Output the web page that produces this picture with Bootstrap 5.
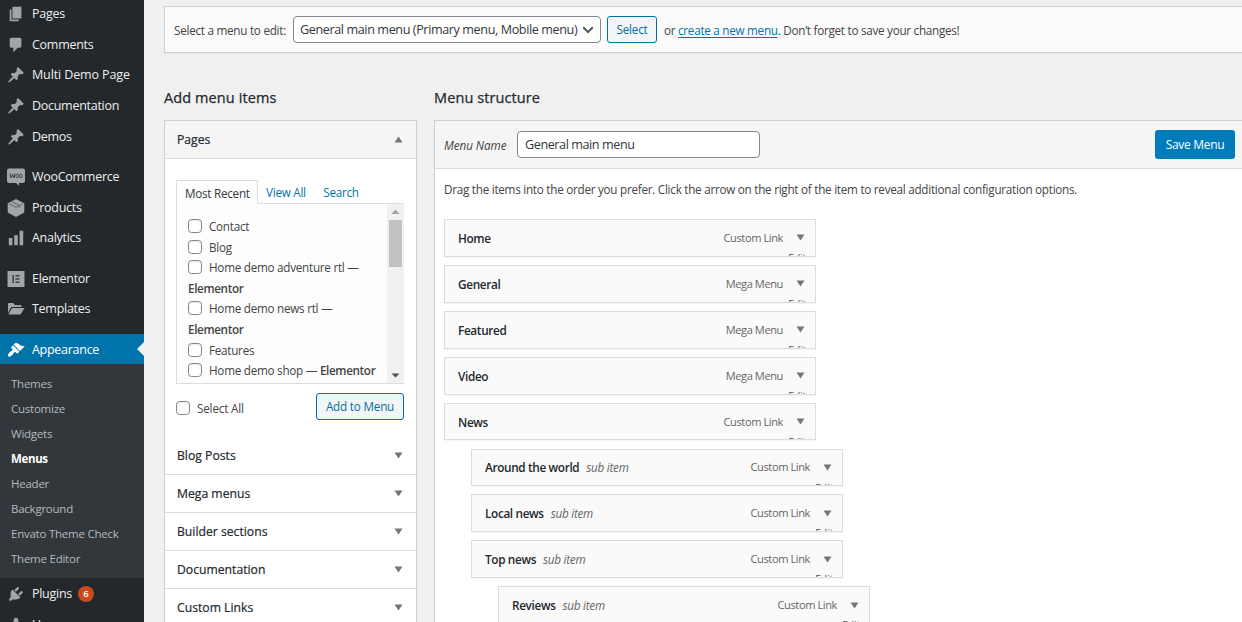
<!DOCTYPE html>
<html lang="en">
<head>
<meta charset="utf-8">
<meta name="viewport" content="width=device-width, initial-scale=1">
<title>Menus</title>
<link rel="stylesheet" href="https://cdn.jsdelivr.net/npm/bootstrap@5.3.0/dist/css/bootstrap.min.css">
<style>
body{width:1242px;height:622px;overflow:hidden;background:#f0f0f1;color:#444;font-family:"Open Sans","Noto Sans",sans-serif;font-size:11.7px;line-height:18px;letter-spacing:-.26px}
/* sidebar */
.side{width:144px;height:622px;background:#23282d;overflow:hidden}
.side ul{margin-top:-1.5px}
.side-item{height:30.6px;padding:1px 0 0 7px;gap:7px;color:#eee;font-size:12.5px;letter-spacing:-.28px}
.side-item svg{width:18px;height:18px;fill:#a0a5aa;flex:none}
.side-gap{height:9.9px}
.side-item.active{background:#0073aa;color:#fff;height:30px}
.side-item.active svg{fill:#fff}
.side-item.active::after{content:"";position:absolute;right:0;top:8px;border:7px solid transparent;border-right-color:#f0f0f1;border-left:0}
.submenu{background:#32373c;padding:7px 0;height:214px}
.submenu .nav-link{height:25px;line-height:25px;padding:0 0 0 11px;color:#b4b9be;font-size:11.5px;letter-spacing:-.24px}
.submenu .nav-link.current{color:#fff;font-weight:700;letter-spacing:-.35px}
.count{width:16px;height:16px;background:#ca4a1f;color:#fff;font-size:9.5px;font-weight:600;line-height:16px;margin-left:-1px;letter-spacing:0}
/* main */
.content-area{padding:6px 0 0 20px;width:1098px}
.manage{height:47px;width:1100px;background:#fbfbfb;border:1px solid #ccd0d4;padding:0 9px;box-shadow:0 1px 1px rgba(0,0,0,.04)}
.field{border:1px solid #7e8993;border-radius:4px;background:#fff;height:27px;color:#32373c;font-size:12.6px;padding:1px 7px 0;line-height:24px}
.manage .field{width:308px;margin:0 6px 0 7px;padding:1px 6px 0;letter-spacing:-.39px}
.manage .field svg{width:12px;height:8px;margin-top:-1px}
.btn-wp{border:1px solid #0071a1;border-radius:3px;background:#f3f5f6;color:#0071a1;height:27px;font-size:11.7px;line-height:25px;padding:0;letter-spacing:-.2px}
.hint{margin-left:7px;letter-spacing:-.27px}
.manage a{color:#0073aa;text-decoration:underline;text-underline-offset:2px}
.heading{font-size:14.5px;font-weight:500;color:#23282d;line-height:20px;margin:0;letter-spacing:.1px;-webkit-text-stroke:.25px #23282d}
.left-col{width:253px;margin-right:17px}
.panel{border:1px solid #ccd0d4;background:#fff;border-radius:0}
.acc-row{height:38px;border-bottom:1px solid #ddd;padding:0 13px 0 12px;color:#23282d;font-size:12.2px;letter-spacing:0;-webkit-text-stroke:.2px #23282d}
.acc-row.open{background:#f5f5f5}
.tri{width:9px;height:7px;fill:#72777c;flex:none}
.tabs-row{height:24px;margin-bottom:-1px;position:relative}
.tab-on{width:82px;height:24px;border:1px solid #ddd;border-bottom:0;background:#fdfdfd;color:#32373c;padding-left:8px;line-height:24px}
.tab-off{color:#0073aa;line-height:24px}
.pages-box{height:181px;border:1px solid #ddd;border-right:0;background:#fdfdfd;overflow:hidden}
.pages-list{padding:12px 0 0 11px;line-height:20.6px}
.pages-list b{font-weight:600;letter-spacing:-.36px}
.pages-list>div{height:20.6px;white-space:nowrap}
.box{width:14px;height:14px;border:1px solid #7e8993;border-radius:3.5px;background:#fff;display:inline-block;flex:none;box-shadow:inset 0 1px 2px rgba(0,0,0,.1)}
.pages-list .box{margin-right:7px;vertical-align:-2px}
.scroll{width:17px;background:#f1f1f1;margin:0 0 -1px;height:180px;padding:5px 0 6px}
.thumb{width:13px;height:47px;background:#c1c1c1;margin-top:6px}
.struct{width:830px;height:520px}
.struct-head{height:48px;background:#f5f5f5;border-bottom:1px solid #ddd;padding:0 9px}
.save{background:#007cba;color:#fff;width:80px;height:29px;border-radius:3px;font-size:12px;line-height:29px;padding:0;border:0;margin-left:395px;letter-spacing:-.32px}
.menu-item{width:372px;height:37.8px;margin-bottom:8.1px;border:1px solid #ddd;background:#fafafa;padding:0 10px 0 13px;overflow:hidden;box-shadow:0 1px 1px rgba(0,0,0,.04)}
.menu-item .label{font-weight:600;color:#23282d;font-size:11.8px;letter-spacing:-.36px}
.menu-item .sub{font-style:italic;color:#666;margin-left:7px}
.menu-item .kind{color:#666;font-size:11.1px;margin-right:13px;letter-spacing:-.42px}
.edit{position:absolute;right:9px;top:31px;font-size:10.5px;line-height:14px;color:#555;letter-spacing:-.2px}
.d1{margin-left:27px}.d2{margin-left:54px}
</style>
</head>
<body>
<div class="d-flex">
<nav class="side flex-shrink-0">
<ul class="nav flex-column flex-nowrap">
<li class="side-item d-flex align-items-center"><svg viewBox="0 0 20 20"><path d="M6 15V2h10v13H6zm-1 1h8v2H3V5h2v11z"/></svg>Pages</li>
<li class="side-item d-flex align-items-center"><svg viewBox="0 0 20 20"><path d="M5 2h9c1.1 0 2 .9 2 2v7c0 1.1-.9 2-2 2h-2l-5 5v-5H5c-1.1 0-2-.9-2-2V4c0-1.1.9-2 2-2z"/></svg>Comments</li>
<li class="side-item d-flex align-items-center" style="letter-spacing:-.12px"><svg viewBox="0 0 20 20"><path id="pin" d="M10.44 3.02l1.82-1.82 6.36 6.35-1.83 1.82c-1.05-.68-2.48-.57-3.41.36l-.75.75c-.92.93-1.04 2.35-.35 3.41l-1.83 1.82-2.41-2.41-2.8 2.79c-.42.42-3.38 2.71-3.8 2.29s1.86-3.39 2.28-3.81l2.79-2.79L4.1 9.36l1.83-1.82c1.05.69 2.48.57 3.4-.36l.75-.75c.93-.92 1.05-2.35.36-3.41z"/></svg>Multi Demo Page</li>
<li class="side-item d-flex align-items-center"><svg viewBox="0 0 20 20"><use href="#pin"/></svg>Documentation</li>
<li class="side-item d-flex align-items-center"><svg viewBox="0 0 20 20"><use href="#pin"/></svg>Demos</li>
<li class="side-gap"></li>
<li class="side-item d-flex align-items-center"><svg viewBox="0 0 18 18"><path d="M2 .5h14a2 2 0 0 1 2 2V13a2 2 0 0 1-2 2h-4l.3 3L9 15H2a2 2 0 0 1-2-2V2.500a2 2 0 0 1 2-2z"/><path d="M3 5.500l1 4.500 1.700-3.500L7 10l1.200-4.500" fill="none" stroke="#3c4146" stroke-width="1"/><ellipse cx="10.300" cy="7.900" rx="1.300" ry="1.900" fill="none" stroke="#3c4146" stroke-width=".9"/><ellipse cx="13.900" cy="7.900" rx="1.300" ry="1.900" fill="none" stroke="#3c4146" stroke-width=".9"/></svg>WooCommerce</li>
<li class="side-item d-flex align-items-center"><svg viewBox="0 0 18 18"><path d="M9 0l8.300 4.200v9.300L9 18 .700 13.500V4.200z"/><path d="M2 4.800L9 8.300l7-3.500M4.800 2.600l7.600 3.800v2.400" fill="none" stroke="#50565c" stroke-width=".8"/></svg>Products</li>
<li class="side-item d-flex align-items-center"><svg viewBox="0 0 20 20"><path d="M18 18V2h-4v16h4zm-6 0V7H8v11h4zm-6 0v-8H2v8h4z"/></svg>Analytics</li>
<li class="side-gap"></li>
<li class="side-item d-flex align-items-center"><svg viewBox="0 0 18 18"><path d="M.500 1h17v16H.500z"/><path d="M5.500 5h1.500v8H5.500zM8.500 5h4v1.500h-4zM8.500 8.250h4v1.500h-4zM8.500 11.500h4V13h-4z" fill="#3c4146"/></svg>Elementor</li>
<li class="side-item d-flex align-items-center"><svg viewBox="0 0 18 18"><path d="M1 13V4.200c0-.7.500-1.200 1.200-1.200h4l1.800 2h5.300c.700 0 1.200.5 1.200 1.200V7H5.300c-.700 0-1.300.3-1.700.9z"/><path d="M1.300 14.500l3.200-5.800c.2-.4.600-.7 1.100-.7h11.800l-3.300 5.800c-.2.400-.6.700-1.100.7z"/></svg>Templates</li>
<li class="side-gap"></li>
<li class="side-item active position-relative d-flex align-items-center"><svg viewBox="0 0 20 20"><path d="M14.480 11.060L7.410 3.990l1.500-1.500c.5-.56 2.300-.47 3.510.32 1.210.8 1.430 1.280 2.910 2.100 1.180.640 2.450 1.260 4.450.850zm-.71.71L6.700 4.700 4.930 6.470c-.39.390-.39 1.020 0 1.410l1.060 1.060c.39.390.39 1.030 0 1.420-.6.6-1.430 1.110-2.210 1.690-.35.260-.7.530-1.010.840C1.430 14.230.400 16.080 1.400 17.070c.99 1 2.840-.03 4.180-1.360.31-.31.580-.66.850-1.020.57-.78 1.080-1.610 1.690-2.210.39-.39 1.020-.39 1.410 0l1.060 1.060c.39.390 1.020.390 1.410 0z"/></svg>Appearance</li>
<li class="submenu">
<a class="nav-link">Themes</a><a class="nav-link">Customize</a><a class="nav-link">Widgets</a><a class="nav-link current">Menus</a><a class="nav-link">Header</a><a class="nav-link">Background</a><a class="nav-link">Envato Theme Check</a><a class="nav-link">Theme Editor</a>
</li>
<li class="side-item d-flex align-items-center"><svg viewBox="0 0 20 20"><path d="M13.110 4.360L9.870 7.600 8 5.730l3.240-3.240c.35-.34 1.050-.2 1.560.32.52.510.66 1.210.31 1.550zm-8 1.770l.91-1.120 9.010 9.010-1.190.840c-.71.710-2.630 1.160-3.820 1.160H6.140L4.900 17.260c-.59.590-1.540.590-2.120 0-.59-.58-.59-1.530 0-2.120l1.240-1.240v-3.880c0-1.130.4-3.190 1.090-3.890zm7.260 3.970l3.240-3.240c.34-.35 1.040-.21 1.550.31.52.510.66 1.210.31 1.550l-3.240 3.250z"/></svg>Plugins <span class="count rounded-circle text-center">6</span></li>
<li class="side-item d-flex align-items-center"><svg viewBox="0 0 20 20"><path d="M10 9.250c-2.270 0-2.730-3.440-2.730-3.440C7 4.020 7.820 2 9.970 2c2.160 0 2.980 2.020 2.710 3.810 0 0-.41 3.440-2.680 3.440zm0 2.570L12.720 10c2.390 0 4.520 2.330 4.520 4.530v2.490s-3.650 1.130-7.240 1.130c-3.650 0-7.240-1.130-7.240-1.130v-2.490c0-2.250 1.940-4.480 4.470-4.480z"/></svg>Users</li>
</ul>
</nav>
<main class="content-area">
<div class="manage d-flex align-items-center text-nowrap">
<span class="pick">Select a menu to edit:</span>
<div class="field d-flex align-items-center justify-content-between flex-shrink-0"><span>General main menu (Primary menu, Mobile menu)</span><svg viewBox="0 0 12 8"><path d="M1.200 1.300L6 6.100l4.800-4.800" fill="none" stroke="#50575e" stroke-width="2"/></svg></div>
<button class="btn btn-wp flex-shrink-0" style="width:50px">Select</button>
<span class="hint">or <a href="#">create a new menu</a>. Don’t forget to save your changes!</span>
</div>
<div class="d-flex" style="margin-top:35px">
<section class="left-col flex-shrink-0">
<h2 class="heading">Add menu items</h2>
<div class="panel" style="margin-top:12px">
<div class="acc-row open d-flex align-items-center justify-content-between">Pages<svg class="tri" viewBox="0 0 9 7"><path d="M.500 6.500h8L4.500.500z"/></svg></div>
<div style="height:278px;padding:21px 12px 0 11px">
<div class="tabs-row d-flex text-nowrap"><span class="tab-on">Most Recent</span><span class="tab-off ms-2">View All</span><span class="tab-off" style="margin-left:17.500px">Search</span></div>
<div class="pages-box d-flex justify-content-between">
<div class="pages-list">
<div><i class="box"></i>Contact</div><div><i class="box"></i>Blog</div><div><i class="box"></i>Home demo adventure rtl —</div><div><b>Elementor</b></div><div><i class="box"></i>Home demo news rtl —</div><div><b>Elementor</b></div><div><i class="box"></i>Features</div><div><i class="box"></i>Home demo shop — <b>Elementor</b></div>
</div>
<div class="scroll d-flex flex-column align-items-center flex-shrink-0"><svg width="9" height="5" viewBox="0 0 9 5"><path d="M.500 5h8L4.500.500z" fill="#a3a3a3"/></svg><div class="thumb"></div><svg class="mt-auto" width="9" height="5" viewBox="0 0 9 5"><path d="M.500.500h8L4.500 4.500z" fill="#505050"/></svg></div>
</div>
<div class="d-flex justify-content-between align-items-center" style="margin-top:9px"><span class="d-flex align-items-center" style="gap:7px;padding-top:3px;letter-spacing:-.18px"><i class="box"></i>Select All</span><button class="btn btn-wp" style="width:88px">Add to Menu</button></div>
</div>
<div class="acc-row d-flex align-items-center justify-content-between">Blog Posts<svg class="tri" viewBox="0 0 9 7"><path id="down" d="M.500.500h8L4.500 6.500z"/></svg></div>
<div class="acc-row d-flex align-items-center justify-content-between">Mega menus<svg class="tri" viewBox="0 0 9 7"><use href="#down"/></svg></div>
<div class="acc-row d-flex align-items-center justify-content-between">Builder sections<svg class="tri" viewBox="0 0 9 7"><use href="#down"/></svg></div>
<div class="acc-row d-flex align-items-center justify-content-between">Documentation<svg class="tri" viewBox="0 0 9 7"><use href="#down"/></svg></div>
<div class="acc-row d-flex align-items-center justify-content-between">Custom Links<svg class="tri" viewBox="0 0 9 7"><use href="#down"/></svg></div>
</div>
</section>
<section>
<h2 class="heading">Menu structure</h2>
<div class="panel struct" style="margin-top:12px">
<div class="struct-head d-flex align-items-center text-nowrap"><i style="width:73px;letter-spacing:-.05px">Menu Name</i><div class="field" style="width:243px;letter-spacing:-.42px">General main menu</div><button class="btn save">Save Menu</button></div>
<p class="text-nowrap" style="margin:11px 0 21.100px 9px">Drag the items into the order you prefer. Click the arrow on the right of the item to reveal additional configuration options.</p>
<div style="padding-left:9px" class="text-nowrap">
<div class="menu-item position-relative d-flex align-items-center"><span class="label">Home</span><span class="kind ms-auto">Custom Link</span><svg class="tri" viewBox="0 0 9 7"><use href="#down"/></svg><span class="edit">Edit</span></div>
<div class="menu-item position-relative d-flex align-items-center"><span class="label">General</span><span class="kind ms-auto">Mega Menu</span><svg class="tri" viewBox="0 0 9 7"><use href="#down"/></svg><span class="edit">Edit</span></div>
<div class="menu-item position-relative d-flex align-items-center"><span class="label">Featured</span><span class="kind ms-auto">Mega Menu</span><svg class="tri" viewBox="0 0 9 7"><use href="#down"/></svg><span class="edit">Edit</span></div>
<div class="menu-item position-relative d-flex align-items-center"><span class="label">Video</span><span class="kind ms-auto">Mega Menu</span><svg class="tri" viewBox="0 0 9 7"><use href="#down"/></svg><span class="edit">Edit</span></div>
<div class="menu-item position-relative d-flex align-items-center"><span class="label">News</span><span class="kind ms-auto">Custom Link</span><svg class="tri" viewBox="0 0 9 7"><use href="#down"/></svg><span class="edit">Edit</span></div>
<div class="menu-item d1 position-relative d-flex align-items-center"><span class="label">Around the world</span><span class="sub">sub item</span><span class="kind ms-auto">Custom Link</span><svg class="tri" viewBox="0 0 9 7"><use href="#down"/></svg><span class="edit">Edit</span></div>
<div class="menu-item d1 position-relative d-flex align-items-center"><span class="label">Local news</span><span class="sub">sub item</span><span class="kind ms-auto">Custom Link</span><svg class="tri" viewBox="0 0 9 7"><use href="#down"/></svg><span class="edit">Edit</span></div>
<div class="menu-item d1 position-relative d-flex align-items-center"><span class="label">Top news</span><span class="sub">sub item</span><span class="kind ms-auto">Custom Link</span><svg class="tri" viewBox="0 0 9 7"><use href="#down"/></svg><span class="edit">Edit</span></div>
<div class="menu-item d2 position-relative d-flex align-items-center"><span class="label">Reviews</span><span class="sub">sub item</span><span class="kind ms-auto">Custom Link</span><svg class="tri" viewBox="0 0 9 7"><use href="#down"/></svg><span class="edit">Edit</span></div>
</div>
</div>
</section>
</div>
</main>
</div>
<script src="https://cdn.jsdelivr.net/npm/bootstrap@5.3.0/dist/js/bootstrap.bundle.min.js"></script>
</body>
</html>
